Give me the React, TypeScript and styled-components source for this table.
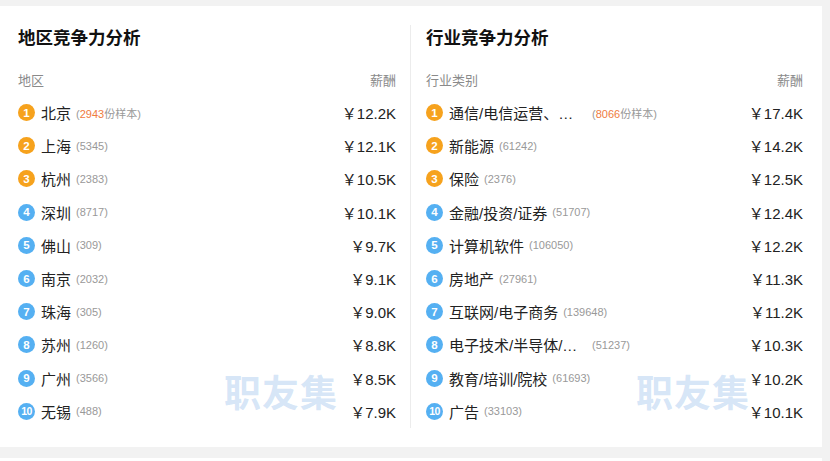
import { createGlobalStyle } from "styled-components";
import styled from "styled-components";

const GlobalStyle = createGlobalStyle`
  html, body {
    margin: 0;
    padding: 0;
    background: #f2f2f2;
  }
  body {
    font-family: "Liberation Sans", "Noto Sans CJK SC", sans-serif;
    color: #333;
  }
`;

interface Item {
  name: string;
  count: number;
  salary: string;
  sample?: boolean;
  short?: string;
}

const regions: Item[] = [
  { name: "北京", count: 2943, salary: "12.2K", sample: true },
  { name: "上海", count: 5345, salary: "12.1K" },
  { name: "杭州", count: 2383, salary: "10.5K" },
  { name: "深圳", count: 8717, salary: "10.1K" },
  { name: "佛山", count: 309, salary: "9.7K" },
  { name: "南京", count: 2032, salary: "9.1K" },
  { name: "珠海", count: 305, salary: "9.0K" },
  { name: "苏州", count: 1260, salary: "8.8K" },
  { name: "广州", count: 3566, salary: "8.5K" },
  { name: "无锡", count: 488, salary: "7.9K" },
];

const industries: Item[] = [
  {
    name: "通信/电信运营、增值服务",
    short: "通信/电信运营、…",
    count: 8066,
    salary: "17.4K",
    sample: true,
  },
  { name: "新能源", count: 61242, salary: "14.2K" },
  { name: "保险", count: 2376, salary: "12.5K" },
  { name: "金融/投资/证券", count: 51707, salary: "12.4K" },
  { name: "计算机软件", count: 106050, salary: "12.2K" },
  { name: "房地产", count: 27961, salary: "11.3K" },
  { name: "互联网/电子商务", count: 139648, salary: "11.2K" },
  {
    name: "电子技术/半导体/集成电路",
    short: "电子技术/半导体/…",
    count: 51237,
    salary: "10.3K",
  },
  { name: "教育/培训/院校", count: 61693, salary: "10.2K" },
  { name: "广告", count: 33103, salary: "10.1K" },
];

const RankPanel = ({
  title,
  label,
  items,
  divided,
}: {
  title: string;
  label: string;
  items: Item[];
  divided?: boolean;
}) => (
  <Column $divided={divided}>
    <Title>{title}</Title>
    <HeadRow>
      <span>{label}</span>
      <span>薪酬</span>
    </HeadRow>
    {items.map((it, i) => (
      <Row key={it.name}>
        <Left>
          <Badge $top={i < 3} $small={i >= 9}>
            {i + 1}
          </Badge>
          <Name title={it.name} $clipped={!!it.short}>
            {it.short ?? it.name}
          </Name>
          <Count>
            (
            {it.sample ? (
              <>
                <Hot>{it.count}</Hot>份样本
              </>
            ) : (
              it.count
            )}
            )
          </Count>
        </Left>
        <Salary>￥{it.salary}</Salary>
      </Row>
    ))}
    <Watermark>职友集</Watermark>
  </Column>
);

export default function App() {
  return (
    <>
      <GlobalStyle />
      <Page>
        <Card>
          <RankPanel title="地区竞争力分析" label="地区" items={regions} />
          <RankPanel title="行业竞争力分析" label="行业类别" items={industries} divided />
        </Card>
        <NextCard />
      </Page>
    </>
  );
}

const Page = styled.div`
  padding-top: 6px;
  width: 822px;
`;

const Card = styled.div`
  background: #fff;
  display: grid;
  grid-template-columns: 410px 1fr;
  padding: 19px 0;
`;

const NextCard = styled.div`
  background: #fff;
  height: 20px;
  margin-top: 11px;
`;

const Column = styled.div<{ $divided?: boolean }>`
  position: relative;
  padding: ${(p) => (p.$divided ? "0 19px 0 15px" : "0 14px 0 18px")};
  border-left: ${(p) => (p.$divided ? "1px solid #ececec" : "none")};
`;

const Title = styled.div`
  font-size: 17.5px;
  font-weight: bold;
  line-height: 26px;
  color: #111;
`;

const HeadRow = styled.div`
  display: flex;
  justify-content: space-between;
  font-size: 13px;
  line-height: 20px;
  color: #8a8a8a;
  margin: 20px 0 5px;
`;

const Row = styled.div`
  display: flex;
  align-items: center;
  justify-content: space-between;
  height: 33.2px;
`;

const Left = styled.div`
  display: flex;
  align-items: center;
  min-width: 0;
`;

const Badge = styled.span<{ $top: boolean; $small: boolean }>`
  flex: none;
  width: 17px;
  height: 17px;
  border-radius: 50%;
  background: ${(p) => (p.$top ? "#f6a21d" : "#55b0f2")};
  color: #fff;
  font-size: ${(p) => (p.$small ? "10.5px" : "11.5px")};
  font-weight: bold;
  letter-spacing: ${(p) => (p.$small ? "-0.5px" : "0")};
  display: flex;
  align-items: center;
  justify-content: center;
  margin-right: 6px;
`;

const Name = styled.span<{ $clipped: boolean }>`
  font-size: 15px;
  color: #222;
  white-space: nowrap;
  width: ${(p) => (p.$clipped ? "138px" : "auto")};
`;

const Count = styled.span`
  font-size: 11px;
  color: #999;
  margin-left: 5px;
  white-space: nowrap;
`;

const Hot = styled.span`
  color: #ef7b3e;
`;

const Salary = styled.span`
  font-size: 15px;
  color: #222;
  white-space: nowrap;
`;

const Watermark = styled.div`
  position: absolute;
  right: 72px;
  bottom: 10px;
  font-size: 37px;
  font-weight: bold;
  color: rgba(150, 190, 235, 0.4);
  pointer-events: none;
  letter-spacing: 1px;
`;
